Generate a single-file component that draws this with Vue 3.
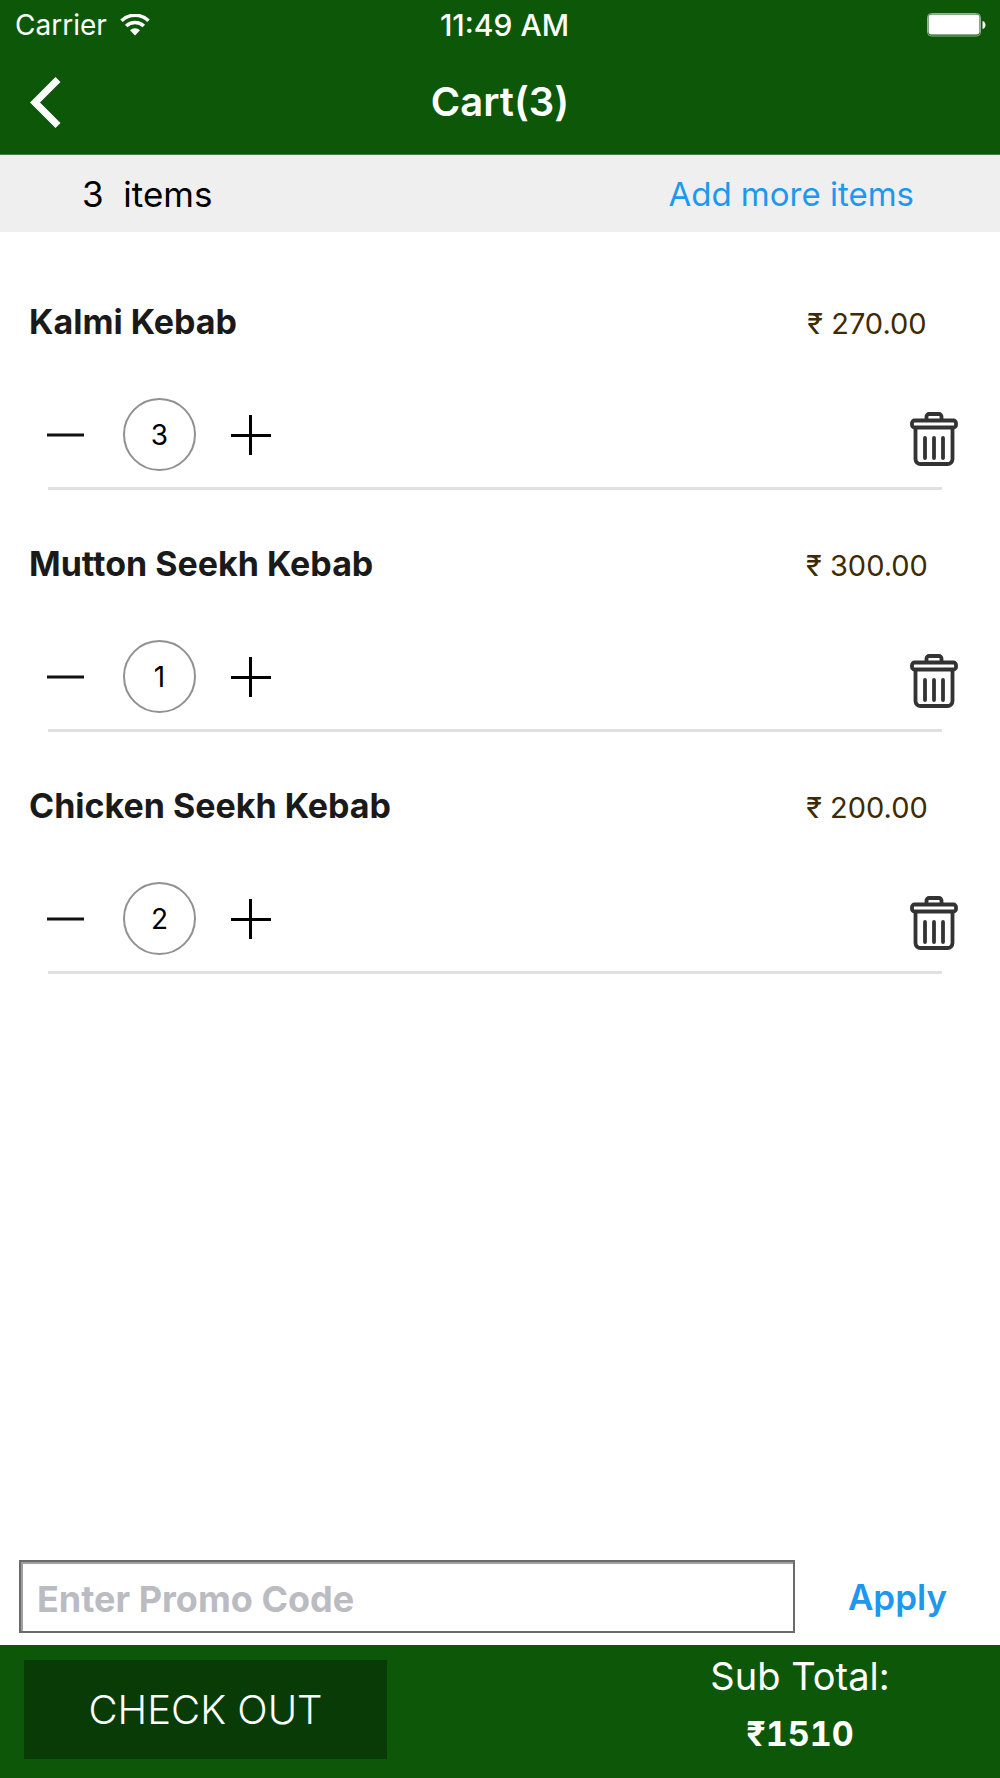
<script setup>
import { ref, computed } from 'vue'

const items = ref([
  { id: 1, name: 'Kalmi Kebab', price: 270, qty: 3 },
  { id: 2, name: 'Mutton Seekh Kebab', price: 300, qty: 1 },
  { id: 3, name: 'Chicken Seekh Kebab', price: 200, qty: 2 }
])
const promo = ref('')

const subTotal = computed(() =>
  items.value.reduce((sum, item) => sum + item.price * item.qty, 0)
)

function decrease(item) {
  if (item.qty > 1) item.qty -= 1
}

function remove(id) {
  items.value = items.value.filter((item) => item.id !== id)
}
</script>

<template>
  <div class="screen">
    <header class="top">
      <div class="status">
        <div class="carrier">
          <span>Carrier</span>
          <svg class="wifi" width="30" height="22" viewBox="0 0 30 22" aria-hidden="true">
            <path d="M1.5 6.7a19.5 19.5 0 0 1 27 0" fill="none" stroke="#fff" stroke-width="3.6" />
            <path d="M6.2 12a12.7 12.7 0 0 1 17.6 0" fill="none" stroke="#fff" stroke-width="3.6" />
            <path d="M15 21.5l-5-5.2a7.2 7.2 0 0 1 10 0z" fill="#fff" />
          </svg>
        </div>
        <span class="time">11:49 AM</span>
        <svg class="battery" width="59" height="24" viewBox="0 0 59 24" aria-hidden="true">
          <rect x="0.5" y="0.5" width="53" height="22.5" rx="4" fill="none" stroke="#8db98d" />
          <rect x="1.5" y="1.5" width="51" height="20" rx="3" fill="#fff" />
          <path d="M55.5 8c4 1 4 7 0 8z" fill="#fff" />
        </svg>
      </div>
      <div class="nav">
        <button class="icon-button" type="button" aria-label="Back">
          <svg width="31" height="51" viewBox="0 0 31 51">
            <path d="M28 2.5L5 25.5l23 23" fill="none" stroke="#fff" stroke-width="7" />
          </svg>
        </button>
        <h1>Cart({{ items.length }})</h1>
      </div>
    </header>

    <div class="summary">
      <span>{{ items.length }}&nbsp; items</span>
      <a class="add" href="#menu">Add more items</a>
    </div>

    <main class="list">
      <section v-for="item in items" :key="item.id" class="item">
        <div class="head">
          <h2>{{ item.name }}</h2>
          <span class="price">₹ {{ item.price.toFixed(2) }}</span>
        </div>
        <div class="controls">
          <button class="icon-button" type="button" aria-label="Decrease quantity" @click="decrease(item)">
            <svg width="37" height="40" viewBox="0 0 37 40">
              <path d="M0 20h37" stroke="#111" stroke-width="3" />
            </svg>
          </button>
          <span class="qty">{{ item.qty }}</span>
          <button class="icon-button" type="button" aria-label="Increase quantity" @click="item.qty += 1">
            <svg width="40" height="40" viewBox="0 0 40 40">
              <path d="M0 20.5h40M19.5 0v40" stroke="#000" stroke-width="3" />
            </svg>
          </button>
          <button class="icon-button trash" type="button" aria-label="Remove item" @click="remove(item.id)">
            <svg width="48" height="54" viewBox="0 0 48 54" fill="none" stroke="#333" stroke-width="3.8">
              <path d="M16.5 8V4.5a2.5 2.5 0 0 1 2.5-2.5h10a2.5 2.5 0 0 1 2.5 2.500V8" />
              <rect x="2" y="8.5" width="44" height="7" rx="2.5" />
              <path d="M5.5 16v31a5 5 0 0 0 5 5h27a5 5 0 0 0 5-5V16" />
              <path d="M15 26v20M24 26v20M33 26v20" stroke-linecap="round" />
            </svg>
          </button>
        </div>
        <hr />
      </section>
    </main>

    <form class="promo" @submit.prevent>
      <input v-model="promo" type="text" placeholder="Enter Promo Code" aria-label="Promo code" />
      <button class="apply" type="submit">Apply</button>
    </form>

    <footer class="bottom">
      <button class="checkout" type="button">CHECK OUT</button>
      <div class="total">
        <span>Sub Total:</span>
        <strong>₹{{ subTotal }}</strong>
      </div>
    </footer>
  </div>
</template>

<style>
body {
  margin: 0;
}
</style>

<style scoped>
.screen {
  display: flex;
  flex-direction: column;
  min-height: 100vh;
  background: #fff;
  color: #000;
  font-family: Inter, Roboto, "Liberation Sans", sans-serif;
}

button {
  border: 0;
  padding: 0;
  background: none;
  font-family: inherit;
  cursor: pointer;
}

svg {
  display: block;
}

h1,
h2 {
  margin: 0;
}

.icon-button {
  display: block;
}

.top {
  background: #0d5709;
  border-bottom: 1px solid #478044;
  color: #fff;
}

.status {
  display: grid;
  grid-template-columns: 1fr auto 1fr;
  align-items: center;
  height: 50px;
  padding: 0 14px 0 15px;
  font-size: 28px;
}

.carrier {
  display: flex;
  align-items: center;
  gap: 13px;
}

.time {
  padding-left: 8px;
  font-size: 30px;
  font-weight: 500;
}

.battery {
  justify-self: end;
}

.nav {
  display: grid;
  grid-template-columns: 1fr auto 1fr;
  align-items: center;
  height: 104px;
  padding: 0 30px;
}

.nav .icon-button {
  justify-self: start;
}

h1 {
  font-size: 40px;
  font-weight: 600;
  line-height: 48px;
}

.summary {
  display: flex;
  align-items: center;
  justify-content: space-between;
  height: 77px;
  padding: 0 86px 0 82px;
  background: #efefef;
  font-size: 35px;
}

.add {
  color: #1d98ee;
  font-size: 33px;
  text-decoration: none;
}

.list {
  flex: 1;
  padding-top: 16px;
}

.head {
  display: flex;
  justify-content: space-between;
  height: 40px;
  padding: 54px 33px 0 29px;
  line-height: 40px;
}

h2 {
  color: #1a1a1a;
  font-size: 34px;
  font-weight: 700;
}

.price {
  width: 200px;
  padding-top: 2px;
  color: #402a00;
  font-size: 29px;
  text-align: center;
}

.controls {
  display: flex;
  align-items: center;
  margin-top: 56px;
  padding: 0 42px 0 47px;
}

.qty {
  box-sizing: border-box;
  width: 73px;
  height: 73px;
  margin: 0 35px 0 39px;
  border: 2px solid #919191;
  border-radius: 50%;
  font-size: 28px;
  line-height: 70px;
  text-align: center;
}

.trash {
  margin-left: auto;
  padding-top: 8px;
}

hr {
  height: 3px;
  margin: 16px 58px 0 48px;
  border: 0;
  background: #e0e0e0;
}

.promo {
  display: flex;
  padding: 0 0 12px 19px;
}

.promo input {
  box-sizing: border-box;
  flex: 1;
  min-width: 0;
  height: 73px;
  padding: 4px 16px 0;
  border: 2px solid #6b6b6b;
  border-radius: 0;
  box-shadow: inset 2px 2px #a0a0a0;
  font-family: inherit;
  font-size: 36px;
  font-weight: 700;
  outline: 0;
}

.promo input::placeholder {
  color: #bbbbc2;
  opacity: 1;
}

.apply {
  width: 205px;
  color: #1d98ee;
  font-size: 35px;
  font-weight: 600;
}

.bottom {
  display: flex;
  align-items: flex-start;
  justify-content: space-between;
  background: #0d5709;
  color: #fff;
}

.checkout {
  width: 363px;
  height: 99px;
  margin: 15px 0 19px 24px;
  background: #083b06;
  color: #fff;
  font-size: 40px;
  font-weight: 300;
}

.total {
  display: flex;
  flex-direction: column;
  width: 400px;
  padding-top: 2px;
  font-size: 38px;
  line-height: 58px;
  text-align: center;
}

.total strong {
  font-size: 34px;
  font-variant-numeric: tabular-nums;
  font-weight: 700;
}
</style>
